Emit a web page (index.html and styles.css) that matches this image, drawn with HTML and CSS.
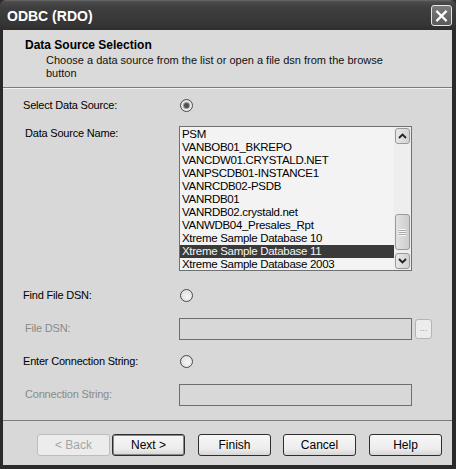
FILE: index.html
```html
<!DOCTYPE html>
<html>
<head>
<meta charset="utf-8">
<link rel="stylesheet" href="styles.css">
</head>
<body>
<div class="win">
  <div class="titlebar">
    <span class="title">ODBC (RDO)</span>
    <span class="close"><svg width="20" height="20" viewBox="0 0 20 20"><path d="M5.5 5.5 L14.5 14.5 M14.5 5.5 L5.5 14.5" stroke="#fff" stroke-width="2.4" stroke-linecap="square"/></svg></span>
  </div>
  <div class="client">
    <div class="header">
      <div class="h-title">Data Source Selection</div>
      <div class="h-desc">Choose a data source from the list or open a file dsn from the browse button</div>
    </div>
    <div class="form">
      <div class="lbl">Select Data Source:</div>
      <div class="ctl"><span class="radio on"></span></div>
      <div></div>

      <div class="lbl sub top">Data Source Name:</div>
      <div class="ctl top">
        <div class="list">
          <div class="items">
            <div class="item">PSM</div>
            <div class="item">VANBOB01_BKREPO</div>
            <div class="item">VANCDW01.CRYSTALD.NET</div>
            <div class="item">VANPSCDB01-INSTANCE1</div>
            <div class="item">VANRCDB02-PSDB</div>
            <div class="item">VANRDB01</div>
            <div class="item">VANRDB02.crystald.net</div>
            <div class="item">VANWDB04_Presales_Rpt</div>
            <div class="item">Xtreme Sample Database 10</div>
            <div class="item sel">Xtreme Sample Database 11</div>
            <div class="item">Xtreme Sample Database 2003</div>
          </div>
          <div class="sbar">
            <div class="sbtn"><svg width="9" height="6" viewBox="0 0 9 6"><path d="M1 5 L4.5 1.5 L8 5" fill="none" stroke="#222" stroke-width="1.8"/></svg></div>
            <div class="track">
              <div class="thumb"><span class="grip"></span></div>
            </div>
            <div class="sbtn"><svg width="9" height="6" viewBox="0 0 9 6"><path d="M1 1 L4.5 4.5 L8 1" fill="none" stroke="#222" stroke-width="1.8"/></svg></div>
          </div>
        </div>
      </div>
      <div></div>

      <div class="lbl">Find File DSN:</div>
      <div class="ctl"><span class="radio"></span></div>
      <div></div>

      <div class="lbl sub dis">File DSN:</div>
      <div class="ctl"><div class="tbox"></div></div>
      <div class="ctl"><span class="browse">...</span></div>

      <div class="lbl">Enter Connection String:</div>
      <div class="ctl"><span class="radio"></span></div>
      <div></div>

      <div class="lbl sub dis">Connection String:</div>
      <div class="ctl"><div class="tbox"></div></div>
      <div></div>
    </div>
    <div class="footer">
      <button class="btn dis b-back">&lt; Back</button>
      <button class="btn def b-next">Next &gt;</button>
      <button class="btn b-finish">Finish</button>
      <button class="btn b-cancel">Cancel</button>
      <button class="btn b-help">Help</button>
    </div>
  </div>
</div>
</body>
</html>
```
FILE: styles.css
```css
* { box-sizing: border-box; }
html, body { margin: 0; padding: 0; background: #1e1e1e; }
body {
  font-family: "Liberation Sans", Arial, sans-serif;
  font-size: 11px;
  color: #000;
}
.win {
  width: 456px;
  height: 469px;
  display: flex;
  flex-direction: column;
  background: #2c2c2c;
}
.titlebar {
  height: 30px;
  flex: none;
  display: flex;
  align-items: center;
  justify-content: space-between;
  padding: 0 4px 0 7px;
  background: linear-gradient(#6a6a6a 0, #4a4a4a 2px, #3e3e3e 8px, #363636 24px, #2e2e2e 30px);
  border-radius: 6px 6px 0 0;
}
.title {
  color: #fff;
  font-family: "Liberation Sans", Arial, sans-serif;
  font-weight: bold;
  font-size: 14px;
  padding-top: 1px;
}
.close {
  width: 21px;
  height: 21px;
  border: 1px solid #e6e6e6;
  border-radius: 3px;
  background: linear-gradient(#7a7a7a, #5a5a5a);
  display: flex;
  align-items: center;
  justify-content: center;
  margin-top: 1px;
}
.client {
  flex: 1;
  display: flex;
  flex-direction: column;
  background: #d8d8d8;
  border-left: 3px solid #2a2a2a;
  border-right: 4px solid #2a2a2a;
  border-bottom: 4px solid #2a2a2a;
}
.header {
  height: 58px;
  flex: none;
  padding: 9px 0 0 22px;
  border-bottom: 1px solid #7c7c7c;
  background: #dadada;
  line-height: 13px;
}
.h-title {
  font-weight: bold;
  font-size: 12px;
}
.h-desc {
  padding: 2px 60px 0 21px;
  color: #111;
}
.form {
  display: grid;
  grid-template-columns: 156px 233px 30px;
  grid-template-rows: 32px 158px 33px 33px 33px 33px;
  padding: 0 0 0 20px;
  align-items: center;
  border-top: 1px solid #f2f2f2;
}
.lbl { line-height: 13px; white-space: nowrap; letter-spacing: -0.2px; }
.lbl.sub { padding-left: 2px; }
.lbl.dis { color: #8a8a8a; }
.top { align-self: start; }
.lbl.top { padding-top: 6px; }
.ctl.top { padding-top: 5px; }
.ctl { display: flex; align-items: center; }
.radio {
  width: 13px;
  height: 13px;
  margin-left: 1px;
  border-radius: 50%;
  border: 1px solid #4a4a4a;
  background: radial-gradient(circle at 60% 60%, #f6f6f6 0, #e4e4e4 60%, #cfcfcf 100%);
  display: flex;
  align-items: center;
  justify-content: center;
}
.radio.on::after {
  content: "";
  width: 5px;
  height: 5px;
  border-radius: 50%;
  background: #505050;
  box-shadow: 0 0 0 1px #9a9a9a;
}
.list {
  width: 233px;
  height: 145px;
  border: 1px solid #707070;
  background: #f3f3f3;
  display: flex;
}
.items {
  flex: 1;
  padding-top: 1px;
  overflow: hidden;
}
.item {
  height: 13px;
  line-height: 13px;
  padding-left: 2px;
  white-space: nowrap;
  font-size: 11.5px;
  letter-spacing: -0.3px;
  color: #000;
}
.item.sel {
  background: #3a3a3a;
  color: #f4f4f4;
}
.sbar {
  width: 17px;
  flex: none;
  display: flex;
  flex-direction: column;
  background: #eeeeee;
  padding: 1px 0;
}
.sbtn {
  height: 16px;
  flex: none;
  margin: 0 1px;
  border: 1px solid #9a9a9a;
  border-radius: 3px;
  background: linear-gradient(90deg, #e8e8e8, #d2d2d2);
  display: flex;
  align-items: center;
  justify-content: center;
}
.track {
  flex: 1;
  display: flex;
  flex-direction: column;
  justify-content: flex-end;
  padding-bottom: 3px;
}
.thumb {
  height: 36px;
  margin: 0 1px;
  border: 1px solid #9a9a9a;
  border-radius: 3px;
  background: linear-gradient(90deg, #e2e2e2, #cdcdcd);
  display: flex;
  align-items: center;
  justify-content: center;
}
.grip {
  width: 7px;
  height: 7px;
  background: repeating-linear-gradient(#f8f8f8 0 1px, #a8a8a8 1px 2px);
}
.tbox {
  width: 233px;
  height: 22px;
  border: 1px solid #6e6e6e;
  background: #d8d8d8;
}
.browse {
  width: 17px;
  height: 20px;
  margin-left: 3px;
  border: 1px solid #b4b4b4;
  border-radius: 3px;
  background: #ececec;
  color: #9a9a9a;
  font-size: 9px;
  display: flex;
  align-items: center;
  justify-content: center;
  line-height: 1;
}
.footer {
  margin-top: 9px;
  border-top: 1px solid #7c7c7c;
  padding: 13px 0 0 34px;
  display: flex;
}
.btn {
  width: 73px;
  height: 22px;
  padding: 0;
  font-family: "Liberation Sans", Arial, sans-serif;
  font-size: 12px;
  color: #000;
  border: 1px solid #2e2e2e;
  border-radius: 3px;
  background: linear-gradient(#f7f7f7, #ececec 70%, #d6d6d6);
}
.btn.def { box-shadow: inset 0 0 0 1px #8a8a8a; }
.btn.dis {
  border-color: #bdbdbd;
  color: #a4a4a4;
  background: #ececec;
}
.b-next { margin-left: 2px; }
.b-finish { margin-left: 13px; }
.b-cancel { margin-left: 12px; }
.b-help { margin-left: 13px; }
```
